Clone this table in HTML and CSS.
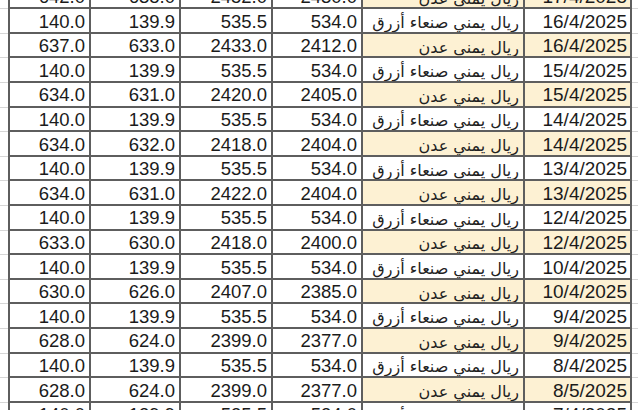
FILE: index.html
```html
<!DOCTYPE html>
<html lang="ar">
<head>
<meta charset="utf-8">
<link rel="stylesheet" href="styles.css">
</head>
<body>
<div class="sheet">
  <div class="row aden"><div class="gut"></div><div class="c n first">642.0</div><div class="c n">638.0</div><div class="c n">2452.0</div><div class="c n">2430.0</div><div class="c t">ريال يمني عدن</div><div class="c d">17/4/2025</div><div class="gut"></div></div>
  <div class="row"><div class="gut"></div><div class="c n first">140.0</div><div class="c n">139.9</div><div class="c n">535.5</div><div class="c n">534.0</div><div class="c t">ريال يمني صنعاء أزرق</div><div class="c d">16/4/2025</div><div class="gut"></div></div>
  <div class="row aden"><div class="gut"></div><div class="c n first">637.0</div><div class="c n">633.0</div><div class="c n">2433.0</div><div class="c n">2412.0</div><div class="c t">ريال يمني عدن</div><div class="c d">16/4/2025</div><div class="gut"></div></div>
  <div class="row"><div class="gut"></div><div class="c n first">140.0</div><div class="c n">139.9</div><div class="c n">535.5</div><div class="c n">534.0</div><div class="c t">ريال يمني صنعاء أزرق</div><div class="c d">15/4/2025</div><div class="gut"></div></div>
  <div class="row aden"><div class="gut"></div><div class="c n first">634.0</div><div class="c n">631.0</div><div class="c n">2420.0</div><div class="c n">2405.0</div><div class="c t">ريال يمني عدن</div><div class="c d">15/4/2025</div><div class="gut"></div></div>
  <div class="row"><div class="gut"></div><div class="c n first">140.0</div><div class="c n">139.9</div><div class="c n">535.5</div><div class="c n">534.0</div><div class="c t">ريال يمني صنعاء أزرق</div><div class="c d">14/4/2025</div><div class="gut"></div></div>
  <div class="row aden"><div class="gut"></div><div class="c n first">634.0</div><div class="c n">632.0</div><div class="c n">2418.0</div><div class="c n">2404.0</div><div class="c t">ريال يمني عدن</div><div class="c d">14/4/2025</div><div class="gut"></div></div>
  <div class="row"><div class="gut"></div><div class="c n first">140.0</div><div class="c n">139.9</div><div class="c n">535.5</div><div class="c n">534.0</div><div class="c t">ريال يمني صنعاء أزرق</div><div class="c d">13/4/2025</div><div class="gut"></div></div>
  <div class="row aden"><div class="gut"></div><div class="c n first">634.0</div><div class="c n">631.0</div><div class="c n">2422.0</div><div class="c n">2404.0</div><div class="c t">ريال يمني عدن</div><div class="c d">13/4/2025</div><div class="gut"></div></div>
  <div class="row"><div class="gut"></div><div class="c n first">140.0</div><div class="c n">139.9</div><div class="c n">535.5</div><div class="c n">534.0</div><div class="c t">ريال يمني صنعاء أزرق</div><div class="c d">12/4/2025</div><div class="gut"></div></div>
  <div class="row aden"><div class="gut"></div><div class="c n first">633.0</div><div class="c n">630.0</div><div class="c n">2418.0</div><div class="c n">2400.0</div><div class="c t">ريال يمني عدن</div><div class="c d">12/4/2025</div><div class="gut"></div></div>
  <div class="row"><div class="gut"></div><div class="c n first">140.0</div><div class="c n">139.9</div><div class="c n">535.5</div><div class="c n">534.0</div><div class="c t">ريال يمني صنعاء أزرق</div><div class="c d">10/4/2025</div><div class="gut"></div></div>
  <div class="row aden"><div class="gut"></div><div class="c n first">630.0</div><div class="c n">626.0</div><div class="c n">2407.0</div><div class="c n">2385.0</div><div class="c t">ريال يمني عدن</div><div class="c d">10/4/2025</div><div class="gut"></div></div>
  <div class="row"><div class="gut"></div><div class="c n first">140.0</div><div class="c n">139.9</div><div class="c n">535.5</div><div class="c n">534.0</div><div class="c t">ريال يمني صنعاء أزرق</div><div class="c d">9/4/2025</div><div class="gut"></div></div>
  <div class="row aden"><div class="gut"></div><div class="c n first">628.0</div><div class="c n">624.0</div><div class="c n">2399.0</div><div class="c n">2377.0</div><div class="c t">ريال يمني عدن</div><div class="c d">9/4/2025</div><div class="gut"></div></div>
  <div class="row"><div class="gut"></div><div class="c n first">140.0</div><div class="c n">139.9</div><div class="c n">535.5</div><div class="c n">534.0</div><div class="c t">ريال يمني صنعاء أزرق</div><div class="c d">8/4/2025</div><div class="gut"></div></div>
  <div class="row aden"><div class="gut"></div><div class="c n first">628.0</div><div class="c n">624.0</div><div class="c n">2399.0</div><div class="c n">2377.0</div><div class="c t">ريال يمني عدن</div><div class="c d">8/5/2025</div><div class="gut"></div></div>
  <div class="row"><div class="gut"></div><div class="c n first">140.0</div><div class="c n">139.9</div><div class="c n">535.5</div><div class="c n">534.0</div><div class="c t">ريال يمني صنعاء أزرق</div><div class="c d">7/4/2025</div><div class="gut"></div></div>
</div>
</body>
</html>
```

FILE: styles.css
```css
html, body {
  margin: 0;
  padding: 0;
  background: #ffffff;
  overflow: hidden;
}

.sheet {
  margin-top: -15.3px;
  width: 638px;
}

.row {
  display: grid;
  grid-template-columns: 8px 83px 90px 92px 90px 162px 107px 6px;
  height: 24.6px;
  font-family: "Liberation Sans", Arial, sans-serif;
  font-size: 18.5px;
  color: #1b1b1b;
}

.gut {
  box-sizing: border-box;
  border-bottom: 1px solid #d6d6d6;
}

.c {
  box-sizing: border-box;
  border-right: 2px solid #5e5e5e;
  border-bottom: 2px solid #5e5e5e;
  display: flex;
  align-items: center;
  justify-content: flex-end;
  padding: 2px 4px 0 0;
  white-space: nowrap;
  overflow: hidden;
}

.c.first {
  border-left: 2px solid #5e5e5e;
}

.t {
  direction: rtl;
  justify-content: flex-start;
  padding: 4px 4px 0 0;
  font-family: "DejaVu Sans", "Noto Sans", sans-serif;
  font-size: 16px;
  color: #222222;
}

.d {
  padding-right: 3px;
  font-size: 19px;
}

.aden .t,
.aden .d {
  background: #fdf1d3;
}
```
